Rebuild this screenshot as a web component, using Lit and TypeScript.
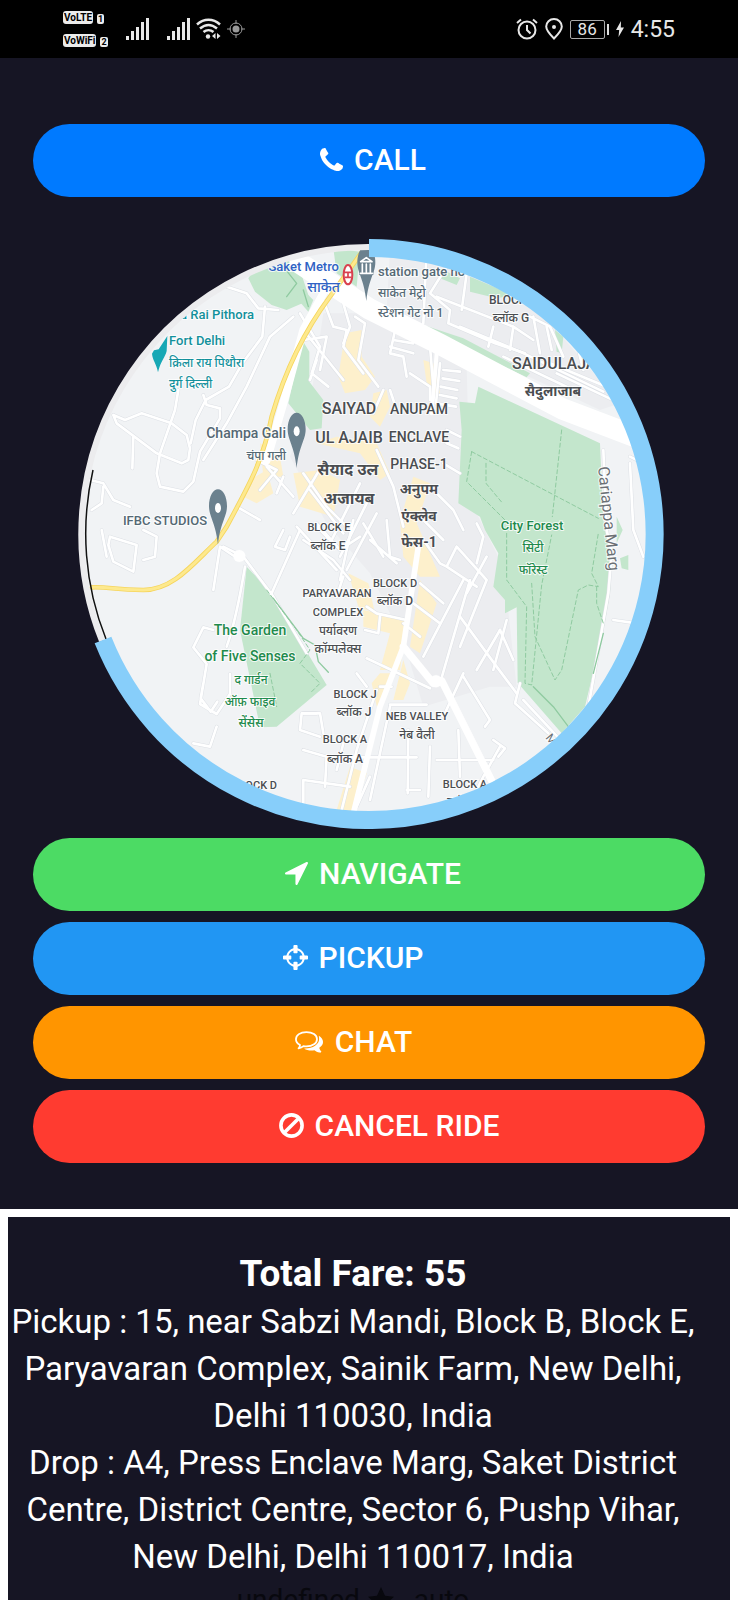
import { LitElement, html, svg, css } from "lit";
import { customElement } from "lit/decorators.js";

const icons = {
  phone: svg`<svg class="icon" width="23" height="23" viewBox="0 128 1408 1408" aria-hidden="true"><path fill="currentColor" d="M1408 1240q0 27-10 70.5t-21 68.5q-21 50-122 106-94 51-186 51-27 0-52.5-3.5t-57.5-12.5-47.5-14.5-55.5-20.5-49-18q-98-35-175-83-128-79-264.5-215.5t-215.5-264.5q-48-77-83-175-3-9-18-49t-20.5-55.5-14.5-47.5-12.5-57.5-3.5-52.5q0-92 51-186 56-101 106-122 25-11 68.5-21t70.5-10q14 0 21 3 18 6 53 76 11 19 30 54t35 63.5 31 53.5q3 4 17.5 25t21.5 35.5 7 28.5q0 20-28.5 50t-62 55-62 53-28.5 46q0 9 5 22.5t8.5 20.5 14 24 11.5 19q76 137 174 235t235 174q2 1 19 11.5t24 14 20.5 8.5 22.5 5q18 0 46-28.5t53-62 55-62 50-28.5q14 0 28.5 7t35.5 21.5 25 17.5q25 15 53.5 31t63.5 35 54 30q70 35 76 53 3 7 3 21z"/></svg>`,
  arrow: svg`<svg class="icon" width="23" height="23" viewBox="192 256 1408 1408" aria-hidden="true"><path fill="currentColor" d="M1593 349l-640 1280q-17 35-57 35-5 0-15-2-22-5-35.5-22.5t-13.5-39.5v-576h-576q-22 0-39.5-13.5t-22.5-35.5 4-42 29-30l1280-640q13-7 29-7 27 0 45 19 15 14 18.5 34.5t-6.5 39.5z"/></svg>`,
  crosshairs: svg`<svg class="icon" width="25" height="25" viewBox="128 128 1536 1536" aria-hidden="true"><path fill="currentColor" d="M1325 1024h-109q-26 0-45-19t-19-45v-128q0-26 19-45t45-19h109q-32-108-112.5-188.5t-188.5-112.5v109q0 26-19 45t-45 19h-128q-26 0-45-19t-19-45v-109q-108 32-188.5 112.5t-112.5 188.5h109q26 0 45 19t19 45v128q0 26-19 45t-45 19h-109q32 108 112.5 188.5t188.5 112.5v-109q0-26 19-45t45-19h128q26 0 45 19t19 45v109q108-32 188.5-112.5t112.5-188.5zm339-192v128q0 26-19 45t-45 19h-143q-37 161-154.5 278.5t-278.5 154.5v143q0 26-19 45t-45 19h-128q-26 0-45-19t-19-45v-143q-161-37-278.5-154.5t-154.5-278.5h-143q-26 0-45-19t-19-45v-128q0-26 19-45t45-19h143q37-161 154.5-278.5t278.5-154.5v-143q0-26 19-45t45-19h128q26 0 45 19t19 45v143q161 37 278.5 154.5t154.5 278.5h143q26 0 45 19t19 45z"/></svg>`,
  comments: svg`<svg class="icon" width="30" height="24" viewBox="163 570 92 72" aria-hidden="true"><path fill="none" stroke="currentColor" stroke-width="5.5" stroke-linejoin="round" d="M201 575.500c19 0 32.500 9.500 32.500 22s-13.500 22-32.500 22c-3 0-6-.3-9-.8-4 3.500-9 6-15 7 3-3 4-6 4.500-10.500-8-4.300-12.500-10.500-12.500-17.700 0-12.500 13-22 32-22z"/><path fill="currentColor" d="M239 587c8 5 13 11.500 13 19 0 7-4.500 13-11.500 17.500 1 5 3 8 6.500 12-.5 3-3 4-6 3-6-1-11-3.500-15.500-7-12 2-23.500 0-31.500-5.500 26 1 46-12 46-29 0-3.500-.3-7-1-10z"/></svg>`,
  ban: svg`<svg class="icon" width="25" height="25" viewBox="0 0 25 25" aria-hidden="true"><g fill="none" stroke="currentColor" stroke-width="3.600"><circle cx="12.500" cy="12.500" r="10.600"/><path d="M5.200 19.800L19.800 5.200"/></g></svg>`,
};

interface Action {
  label: string;
  icon: keyof typeof icons;
  tone: string;
}

const actions: Action[] = [
  { label: "NAVIGATE", icon: "arrow", tone: "green lead" },
  { label: "PICKUP", icon: "crosshairs", tone: "blue trail" },
  { label: "CHAT", icon: "comments", tone: "orange trail" },
  { label: "CANCEL RIDE", icon: "ban", tone: "red far" },
];

/* Drawn in a grid three times as fine as the labels. */
const minorRoads = [
  "M130 555l10 25 120 90 75 30 20-10 5-35-10-40-45-35-90-30-50 20z",
  "M325 480l-10 60-45 130 -10 60 10 40 70 15 30-30 20-90 60-100 0-30 -40-10 -10-30",
  "M190 620l-3 95M470 170l60 20 35 45 60 5M585 230l-8 90-60 80-40 70-70 40-30 60-15 70",
  "M670 260l-70 60-70 150-60 110-70 110M60 750l40 10 30 50 50 20M100 770l-5 50-30 20",
  "M120 920l80 25-10 80-60-30-15-50zM220 900l40 20-5 60-35 10M95 900l15 80",
  "M430 1080l20-130 60 40M470 1250c25-70 40-150 55-240",
  "M460 950l60 30 90 120 100 170",
  "M640 900l-25 50 30 10 15-40M690 900l-85 190M700 930l90 60 50 60M740 890l60 60",
  "M430 1200l-30-8-30 60 40 50 -20 120 50 30 40-60 0-60M400 1360l-8 45 30 40 20-30",
  "M370 1540l50 10 20-60M740 1450l-45 0-5 50 60 20M700 1560l70 20-5 90M700 1650l140 20M700 1740l0-90",
  "M690 250l60 100-25 80 50 40M700 330l70-10-20 100M760 210l30 80 40 10-10 50 60 80",
  "M820 220l20 70-20 50M855 260l30 20-20 110 60 80M700 300l120 150M740 390l-20 60",
  "M980 280l-20 90 40 10 10 60M960 350l70 20M1030 340l-60-10M1020 430l60 40 0 40M1080 350l10 120",
  "M560 690l60 30-50 60M590 710l80 90M540 760l-40 70 70 40M640 740l-20 50M700 730l70 100 60 60M760 700l-90 150M720 780l100 130",
  "M920 660l50 110 30 120M940 480l-30 70M960 480l20 60M870 760l-90 180M900 800l-90 180M920 850l-90 170",
  "M1070 60l-10 220M1130 110l-50 80 60 50-5 40 140 60 90 30M1190 130l-15 110M1100 200l230 90 60 40M1330 290l-10 70M1270 290l-15 60M1390 260l20 110M1380 260l60 30 40 90M1430 290l15 70M1520 340l20 80",
  "M1170 290l180 75 250 120M1440 400l170 70M1460 430l190 90M1300 380l210 100",
  "M1110 400l-12 120 60 10M1120 420l50 5M1118 445l50 8M1112 470l50 10M1110 495l50 10M1130 600l40 20M1130 640l35 15M1120 700l50 30M1090 780l60 60 30 60",
  "M680 890l120 130M740 880l70 80 60-40M850 870l-40 180M880 880l60 100M900 930l80 70M950 870l10 110 30 10M820 1040l-20 60",
  "M1060 930l50 70 20 10M1060 870l60 60M1050 1060l70 60M1160 950l90 100-80 200M1160 950l-30 60 90 60M1220 880l20 40-20 80",
  "M1180 1050l-120 230M1200 1050l-90 310M1170 1160l110 150 60 80M1290 1200l-70 120M1190 1090l60-110",
  "M1310 1170l-40 150M1290 1200l40 90M1180 1330l-60 130M1180 1340l80 130-15 20M1350 1360l-15 60 100 90",
  "M1360 1410l130 140M1290 1550l-50 90M1270 1530l35 25-20 25M1240 1640l-40 80",
  "M840 1582h200M1015 1500l-2 190M1100 1590h170M1165 1500l5 140M1080 1550l-5 150M1010 1680h40M960 1424h110",
  "M890 1130l30 20 90 20M930 1160l-5 50-40-10M890 1285l190 90M1000 1180l50 40M1030 1120l80 60M860 1330l30 40M960 1430l-60 280",
  "M1600 660l10 240 15 70-10 120-65 370M1680 700l10 200 30 80M1630 1170l70 10M1680 680l40 20",
  "M700 1450h50l10 60M920 1380l-60 180-50 200M900 1640l-40 90M820 1540l-20 80M930 1370l35 0",
];

const greens = [
  "M535 145l20 40 50 40 45 15 70-30-25-75-50-55-90 35z",
  "M790 55l80 10-10 105-60-40z",
  "M690 170l40 40-15 35-35-40z",
  "M700 335l18 30v90l42 55-5 85-35 5-65-80 25-115z",
  "M1225 470l365 170 10 230 25 120-5 100-20 110-55 230-70 80-132-152-3-226-35 18v-40l-35-40 15-100-40-70-15-40-65-40 10-220-7-85 47 5z",
  "M530 1010l75 80 165 275-150 125-50 2-60-292z",
  "M1200 140l130 55-50 10-80-20z",
  "M1060 285l120 40 200 105-10 12-310-147z",
  "M1480 510l80 30 90 40-20 8-130-50z",
  "M1640 860l18 40-18 40zM1650 985l25-10v45l-20-5z",
  "M1455 300l25 20-5 50-15-5zM1110 115l60 30-10 20-50-20z",
];

const sands = [
  "M825 310l50-10 0 80 40 60-30 40-60 10-20-50z",
  "M570 640l60 40 10 60-60 0zM540 750l50-30 20 70-50 30-40-20z",
  "M670 730l80-10 60 30-20 110-100-30z",
  "M910 490l40-10 10 50-30 60-30-30zM1060 390l30 10 20 90-10 10-30-40z",
  "M740 640l60-20 120 20 40 90-30 20-60-80z",
  "M990 870l40-130 50 20-40 120 70 160-60 0-50-60z",
  "M1050 1050l50 70-50 150-30-20z",
  "M835 1030l60 30 20 90-50-20z",
  "M880 1140l130 30-20 150-60 0 30-110-80-20z",
  "M930 1330l40 0-45 120-20-90zM1000 1290l20 70-20 50-30 0z",
  "M840 1610l50 20-40 120-50-10z",
];

type Label = [string, number, number, string, string?];
/* text, x, y, class names, transform */
const labels: Label[] = [
  ["Saket Metro", 339, 271, "t13 metro end"],
  ["साकेत", 340, 292, "t14 metro end"],
  ["station gate no 1", 378, 276, "t13 slate start"],
  ["साकेत मेट्रो", 378, 297, "t12 slate start"],
  ["स्टेशन गेट नो 1", 378, 317, "t12 slate start"],
  ["Qila Rai Pithora", 254, 319, "t13 teal end"],
  ["Fort Delhi", 169, 345, "t13 teal start"],
  ["क़िला राय पिथौरा", 169, 367, "t12 teal start"],
  ["दुर्ग दिल्ली", 169, 388, "t12 teal start"],
  ["BLOCK G", 489, 304, "t12 ink start"],
  ["ब्लॉक G", 511, 322, "t12 ink"],
  ["SAIDULAJAB", 512, 369, "t16 ink start"],
  ["सैदुलाजाब", 553, 396, "t14 ink strong"],
  ["Champa Gali", 286, 438, "t14 slate end"],
  ["चंपा गली", 286, 460, "t12 slate end"],
  ["IFBC STUDIOS", 207, 525, "t13 slate end"],
  ["SAIYAD", 349, 414, "t16 ink"],
  ["UL AJAIB", 349, 443, "t16 ink"],
  ["सैयाद उल", 348, 475, "t16 ink strong"],
  ["अजायब", 349, 504, "t16 ink strong"],
  ["ANUPAM", 419, 414, "t14 ink"],
  ["ENCLAVE", 419, 442, "t14 ink"],
  ["PHASE-1", 419, 469, "t14 ink"],
  ["अनुपम", 419, 494, "t14 ink strong"],
  ["एंक्लेव", 419, 521, "t14 ink strong"],
  ["फेस-1", 419, 547, "t14 ink strong"],
  ["BLOCK E", 329, 531, "t11 ink"],
  ["ब्लॉक E", 328, 550, "t12 ink"],
  ["PARYAVARAN", 337, 597, "t11 ink"],
  ["COMPLEX", 338, 616, "t11 ink"],
  ["पर्यावरण", 338, 635, "t12 ink"],
  ["कॉम्पलेक्स", 338, 653, "t12 ink"],
  ["BLOCK D", 395, 587, "t11 ink"],
  ["ब्लॉक D", 395, 605, "t12 ink"],
  ["The Garden", 250, 635, "t14 park"],
  ["of Five Senses", 250, 661, "t14 park"],
  ["द गार्डन", 251, 684, "t12 park"],
  ["ऑफ़ फाइव", 250, 706, "t12 park"],
  ["सेंसेस", 251, 727, "t12 park"],
  ["BLOCK J", 355, 698, "t11 ink"],
  ["ब्लॉक J", 354, 716, "t12 ink"],
  ["BLOCK A", 345, 743, "t11 ink"],
  ["ब्लॉक A", 345, 763, "t12 ink"],
  ["NEB VALLEY", 417, 720, "t11 ink"],
  ["नेब वैली", 417, 739, "t12 ink"],
  ["BLOCK D", 277, 789, "t11 ink end"],
  ["BLOCK A", 465, 788, "t11 ink"],
  ["ब्लॉक A", 465, 806, "t12 ink"],
  ["City Forest", 532, 530, "t13 park"],
  ["सिटी", 533, 552, "t12 park"],
  ["फॉरेस्ट", 533, 574, "t12 park"],
  ["Cariappa Marg", 598, 467, "t16 road start", "rotate(84 598 467)"],
  ["Marg", 545, 738, "t12 road start", "rotate(50 545 738)"],
];

const pin = (x: number, y: number) => svg`
  <path fill="#6b818e" d="M${x} ${y}c15 0 27 22 27 50 0 32-20 50-27 116-7-66-27-84-27-116 0-28 12-50 27-50z"/>
  <ellipse cx=${x} cy=${y + 56} rx="9" ry="15" fill="#fff"/>`;

@customElement("ride-map")
class RideMap extends LitElement {
  static styles = css`
    :host { display: block; width: 100%; max-width: 590px; }
    .map { display: block; width: 100%; height: auto; }
    text {
      font-family: Roboto, "Noto Sans", "Noto Sans Devanagari", sans-serif;
      font-weight: 500;
      text-anchor: middle;
      paint-order: stroke;
      stroke: #ffffffcc;
      stroke-width: 2px;
    }
    .start { text-anchor: start; }
    .end { text-anchor: end; }
    .t11 { font-size: 11px; }
    .t12 { font-size: 12px; }
    .t13 { font-size: 13px; }
    .t14 { font-size: 14px; }
    .t16 { font-size: 16px; }
    .strong { font-weight: 700; }
    .ink { fill: #4a4d51; }
    .slate { fill: #546874; }
    .road { fill: #6b7075; font-weight: 400; }
    .metro { fill: #2f62c4; }
    .teal { fill: #12909b; }
    .park { fill: #1e8a4c; }
  `;

  render() {
    return html`
      <svg class="map" viewBox="74 239 590 590" role="img" aria-label="Map of the ride">
        <defs><clipPath id="disc"><circle cx="369" cy="534" r="286"/></clipPath></defs>
        <g clip-path="url(#disc)">
          <rect x="74" y="239" width="590" height="590" fill="#f1f3f5"/>
          <g transform="translate(70 230) scale(.33333)" fill="none" stroke-linejoin="round" stroke-linecap="round">
            <path fill="#ecedf0" d="M760 250l140 0 290 160 10 400 100 200 40 360-80 0-200 60-60-200-100-200-130-150-110-200 60-160z"/>
            <path fill="#ecedf0" d="M960 60l360 80 330 380-60 20-640-300z"/>
            <g fill="#c3e6cc">${greens.map((d) => svg`<path d=${d}/>`)}</g>
            <g fill="#fdf0cc">${sands.map((d) => svg`<path d=${d}/>`)}</g>
            <g stroke="#dde0e5" stroke-width="11">${minorRoads.map((d) => svg`<path d=${d}/>`)}</g>
            <g stroke="#fff" stroke-width="8">${minorRoads.map((d) => svg`<path d=${d}/>`)}</g>
            <g stroke="#fff">
              <path stroke-width="64" d="M690 100l210 138 210 105 370 195 290 110"/>
              <path stroke-width="24" d="M760 190l-60 110-60 220-50 170"/>
              <path stroke-width="17" d="M1045 950l-45 300-70 180-80 320"/>
              <path stroke-width="22" d="M1000 1250l90 110 25-8 150 300 20 60"/>
              <path stroke-width="12" d="M1100 370l-15 180"/>
              <circle cx="508" cy="978" r="18" fill="#fff"/>
              <circle cx="1098" cy="1354" r="18" fill="#fff"/>
            </g>
            <path stroke="#f6d55c" stroke-width="14" d="M880 60L780 200C690 320 640 440 605 560 580 690 540 760 470 890L440 935C370 1000 310 1080 220 1080S120 1070 66 1072"/>
            <path stroke="#fde98e" stroke-width="9" d="M880 60L780 200C690 320 640 440 605 560 580 690 540 760 470 890L440 935C370 1000 310 1080 220 1080S120 1070 66 1072"/>
            <g stroke="#8fcaa0" stroke-width="3" stroke-dasharray="12 8">
              <path d="M1475 600l-28 260M1205 665l380 200M1205 665l-15 90 60 60 60 60M1248 700l0 60 50 60M1310 910l0 140 60 80-5 230 20 5 30-300 30-150M1385 1060l10 160 60 130 20-30 50-240 30-15 30 5-20-40 20-120M1580 1070l0 50 20 60M590 1080l90 120 40 60-30 40 60 60-30 30M600 1330l20 100"/>
            </g>
            <path stroke="#8fcaa0" stroke-width="4" d="M610 1105l90 120 35 20 10 50 30 32M1390 1370l60 60 45 60M1600 1210l-30 120M640 110l40 50-30 40M700 180l15 50"/>
            ${pin(680, 548)}${pin(444, 778)}${pin(889, 47)}
            <path fill="#6b818e" d="M868 75h42v60h-42z"/>
            <path stroke="#fff" stroke-width="5" d="M872 95l17-12 17 12zM877 102v24M889 102v24M901 102v24M871 130h36"/>
            <path fill="#17a8b5" d="M292 318l-2 45c-4 18-18 30-26 64-4-25-16-35-18-56l6-10 14-3z"/>
            <ellipse cx="834" cy="134" rx="13" ry="29" fill="#fff" stroke="#d9404e" stroke-width="6"/>
            <path stroke="#d9404e" stroke-width="5" d="M824 127h20M826 142h16M834 127v15"/>
          </g>
          ${labels.map(([t, x, y, c, r]) => svg`<text class=${c} x=${x} y=${y} transform=${r ?? ""}>${t}</text>`)}
        </g>
        <path d="M369 247A287 287 0 0 0 102 641" fill="none" stroke="#ececee" stroke-width="6"/>
        <path d="M93 470A283 283 0 0 0 106 639" fill="none" stroke="#111" stroke-width="1.500"/>
        <path d="M369 248A286 286 0 1 1 103 640" fill="none" stroke="#87cefa" stroke-width="18"/>
      </svg>`;
  }
}

@customElement("status-bar")
class StatusBar extends LitElement {
  static styles = css`
    :host {
      display: flex;
      justify-content: space-between;
      align-items: center;
      height: 58px;
      padding: 0 63px;
      box-sizing: border-box;
      background: #000;
      color: #e8e8e8;
      font-family: Roboto, sans-serif;
    }
    .side, .radios, .sims, .sim { display: flex; align-items: center; }
    .side { gap: 18px; }
    .radios { gap: 6px; }
    .sims { flex-direction: column; align-items: flex-start; gap: 10px; }
    .sim { align-items: flex-end; gap: 4px; }
    .badge, .slot {
      background: #ececec;
      color: #000;
      border-radius: 3px;
      font-size: 10px;
      line-height: 13px;
      font-weight: 700;
      padding: 0 1px;
    }
    .slot { font-size: 9px; line-height: 10px; border-radius: 2px; }
    .right { gap: 7px; }
    .battery { display: flex; align-items: center; gap: 2px; }
    .level {
      width: 35px;
      height: 19px;
      box-sizing: border-box;
      border: 1px solid #aaa;
      border-radius: 2px;
      font-size: 17px;
      line-height: 17px;
      text-align: center;
    }
    .nub { width: 2px; height: 11px; background: #ddd; }
    .clock { font-size: 23px; line-height: 28px; padding-top: 2px; }
  `;

  private signal() {
    return svg`<svg width="23" height="22" viewBox="0 0 23 22" fill="currentColor" aria-hidden="true"><path d="M0 18h3v4H0zM5 13h3v9H5zM10 9h3v13h-3zM15 4h3v18h-3zM20 0h3v22h-3z"/></svg>`;
  }

  render() {
    return html`
      <div class="side">
        <div class="sims">
          <div class="sim"><span class="badge">VoLTE</span><span class="slot">1</span></div>
          <div class="sim"><span class="badge">VoWiFi</span><span class="slot">2</span></div>
        </div>
        ${this.signal()}
        <div class="radios">
          ${this.signal()}
          <svg width="25" height="22" viewBox="0 0 25 22" fill="none" stroke="currentColor" stroke-width="2.500" aria-hidden="true">
            <path d="M1 6.500C8 .2 17 .2 24 6.500M4 10.500c5.500-4.600 11.500-4.600 17 0M7.500 14c3-2.500 7-2.500 10 0"/>
            <circle cx="12" cy="18.500" r="2.200" fill="currentColor" stroke="none"/>
            <path stroke="none" fill="currentColor" d="M19.500 15v6l-3.500-3zM21 15v6l3.500-3z"/>
          </svg>
          <svg width="18" height="18" viewBox="0 0 18 18" fill="none" stroke="#999" aria-hidden="true">
            <circle cx="9" cy="9" r="6"/><circle cx="9" cy="9" r="3.500" fill="#999" stroke="none"/>
            <path d="M9 0v4M9 14v4M0 9h4M14 9h4"/>
          </svg>
        </div>
      </div>
      <div class="side right">
        <svg width="22" height="22" viewBox="0 0 22 22" fill="none" stroke="currentColor" stroke-width="2" aria-hidden="true">
          <circle cx="11" cy="12" r="8.500"/><path d="M11 7v5l3.500 3.500M1 5l4-3.500M21 5l-4-3.500"/>
        </svg>
        <svg width="18" height="22" viewBox="0 0 18 22" fill="none" stroke="currentColor" stroke-width="2" aria-hidden="true">
          <path d="M9 20.500C4 15.500 1.200 12 1.200 8.500a7.800 7.500 0 0 1 15.600 0c0 3.500-2.800 7-7.800 12z"/><circle cx="9" cy="9" r="2" fill="currentColor" stroke="none"/>
        </svg>
        <div class="battery"><span class="level">86</span><span class="nub"></span></div>
        <svg width="8" height="16" viewBox="0 0 8 16" fill="currentColor" aria-hidden="true"><path d="M5 0L0 9h3.200L2.500 16 8 6.500H4.800z"/></svg>
        <span class="clock">4:55</span>
      </div>`;
  }
}

@customElement("app-root")
class AppRoot extends LitElement {
  static styles = css`
    :host {
      display: flex;
      flex-direction: column;
      height: 100vh;
      background: #fff;
      font-family: Roboto, "Noto Sans", sans-serif;
    }
    status-bar { flex: none; }
    .page {
      flex: 1;
      min-height: 0;
      overflow-y: auto;
      scrollbar-width: none;
    }
    .ride {
      display: flex;
      flex-direction: column;
      align-items: center;
      padding: 66px 33px 46px;
      background: #161524;
    }
    .actions {
      display: flex;
      flex-direction: column;
      gap: 11px;
      width: 100%;
      margin-top: 9px;
    }
    .call { margin-bottom: 42px; }
    .button {
      display: flex;
      align-items: center;
      justify-content: center;
      gap: 11px;
      width: 100%;
      height: 73px;
      border: 0;
      border-radius: 37px;
      color: #fff;
      font: 500 30px/40px Roboto, sans-serif;
      cursor: pointer;
    }
    .icon { flex: none; }
    .lead { padding: 0 0 2px 8px; }
    .trail { padding: 0 32px 2px 0; }
    .far { padding: 0 0 2px 40px; }
    .primary { background: #007aff; }
    .green { background: #4cdb64; }
    .blue { background: #2196f3; }
    .orange { background: #ff9500; }
    .red { background: #ff3b30; }
    .fare {
      margin: 8px;
      padding: 32px 32px 32px 0;
      background: #161524;
      color: #fff;
      text-align: center;
      font-size: 33px;
      line-height: 47px;
    }
    .total { margin: 0; font-size: 37px; line-height: 49px; font-weight: 700; }
    .line { margin: 0; }
    .driver {
      display: flex;
      justify-content: center;
      align-items: center;
      gap: 8px;
      margin: 0;
      color: #08080e;
      font-size: 28px;
      line-height: 40px;
    }
    .kind { padding-left: 12px; }
  `;

  render() {
    return html`
      <status-bar></status-bar>
      <main class="page">
        <section class="ride">
          <button class="button call primary lead" type="button">${icons.phone}<span>CALL</span></button>
          <ride-map></ride-map>
          <div class="actions">
            ${actions.map((a) => html`<button class="button ${a.tone}" type="button">${icons[a.icon]}<span>${a.label}</span></button>`)}
          </div>
        </section>
        <section class="fare">
          <h1 class="total">Total Fare: 55</h1>
          <p class="line">Pickup : 15, near Sabzi Mandi, Block B, Block E, Paryavaran Complex, Sainik Farm, New Delhi, Delhi 110030, India</p>
          <p class="line">Drop : A4, Press Enclave Marg, Saket District Centre, District Centre, Sector 6, Pushp Vihar, New Delhi, Delhi 110017, India</p>
          <p class="driver">
            <span>undefined</span>
            <svg width="26" height="26" viewBox="0 0 26 26" fill="currentColor" aria-hidden="true"><path d="M13 0l4 8.700 9 1-6.700 6.300 1.900 9.500L13 20.800l-8.200 4.700 1.900-9.500L0 9.700l9-1z"/></svg>
            <span class="kind">auto</span>
          </p>
        </section>
      </main>`;
  }
}
